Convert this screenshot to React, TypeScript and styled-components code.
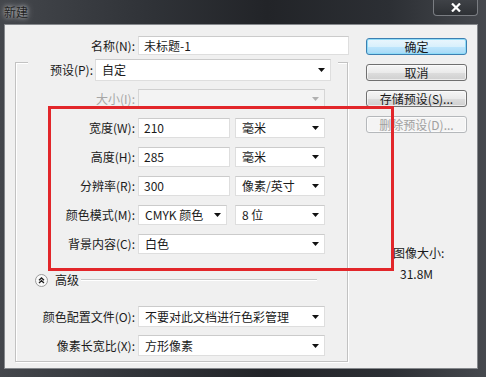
import React from 'react';
import styled, { createGlobalStyle } from 'styled-components';

const GlobalStyle = createGlobalStyle`
  html, body {
    margin: 0;
    padding: 0;
    background: #2d3035;
  }
  body {
    font-family: "Noto Sans CJK SC", "Noto Sans", sans-serif;
    font-size: 12px;
    color: #1a1a1a;
  }
`;

const Window = styled.div`
  position: relative;
  width: 486px;
  height: 377px;
  display: flex;
  flex-direction: column;
  background: linear-gradient(90deg, #44474c 0%, #303338 30%, #222428 55%, #2c2f34 80%, #46494e 100%);
  overflow: hidden;
`;

const TitleBar = styled.div`
  flex: none;
  height: 24px;
  display: flex;
  justify-content: space-between;
  align-items: flex-start;
  padding-left: 4px;
`;

const Title = styled.div`
  line-height: 24px;
  color: #222;
  text-shadow: 0 0 4px rgba(255, 255, 255, 0.75), 0 0 8px rgba(255, 255, 255, 0.4);
`;

const CloseButton = styled.div`
  width: 45px;
  height: 16px;
  margin-right: 8px;
  box-sizing: border-box;
  border: 1px solid #7a7d82;
  border-top: none;
  border-radius: 0 0 4px 4px;
  background: linear-gradient(#3f4247, #2e3135);
  display: flex;
  align-items: center;
  justify-content: center;
`;

const Body = styled.div`
  flex: 1;
  margin: 0 8px 8px 4px;
  background: #f0f0f0;
  border: 1px solid #85888c;
  display: flex;
`;

const LeftPane = styled.div`
  width: 344px;
  padding-top: 11px;
  display: flex;
  flex-direction: column;
`;

const NameRow = styled.div`
  display: grid;
  grid-template-columns: 130px 211px;
  column-gap: 3px;
  align-items: center;
`;

const Label = styled.div<{ $disabled?: boolean }>`
  text-align: right;
  white-space: nowrap;
  line-height: 16px;
  color: ${(p) => (p.$disabled ? '#a6a6a6' : '#1a1a1a')};
`;

const Field = styled.div<{ $w?: number; $h?: number }>`
  box-sizing: border-box;
  width: ${(p) => (p.$w ? `${p.$w}px` : '100%')};
  height: ${(p) => p.$h ?? 20}px;
  background: #fff;
  border: 1px solid #dedede;
  border-top-color: #cbcbcb;
  padding-left: 5px;
  display: flex;
  align-items: center;
  line-height: 16px;
  white-space: nowrap;
`;

const Select = styled.div<{ $w?: number; $h?: number; $disabled?: boolean }>`
  box-sizing: border-box;
  width: ${(p) => (p.$w ? `${p.$w}px` : '100%')};
  height: ${(p) => p.$h ?? 20}px;
  background: ${(p) => (p.$disabled ? '#f3f3f3' : '#fff')};
  border: 1px solid ${(p) => (p.$disabled ? '#d6d6d6' : '#dedede')};
  border-top-color: ${(p) => (p.$disabled ? '#cfcfcf' : '#cbcbcb')};
  padding: 0 5px 0 6px;
  display: flex;
  align-items: center;
  justify-content: space-between;
  line-height: 16px;
  white-space: nowrap;
`;

const GroupBox = styled.div`
  margin: 7px 0 0 10px;
  width: 333px;
  height: 300px;
  box-sizing: border-box;
  border: 1px solid #c2c2c2;
  box-shadow: inset 1px 1px 0 #fff, 1px 1px 0 #fff;
  display: flex;
  flex-direction: column;
`;

const PresetRow = styled.div`
  margin: -4px 0 0 12px;
  width: 310px;
  height: 22px;
  background: #f0f0f0;
  display: flex;
  align-items: center;
  gap: 2px;
`;

const PresetLabel = styled(Label)`
  width: 65px;
`;

const FormGrid = styled.div<{ $gap: number; $top: number }>`
  margin-top: ${(p) => p.$top}px;
  display: grid;
  grid-template-columns: 119px 187px;
  column-gap: 3px;
  row-gap: ${(p) => p.$gap}px;
  align-items: center;
`;

const Pair = styled.div<{ $gap: number }>`
  display: flex;
  gap: ${(p) => p.$gap}px;
`;

const AdvancedRow = styled.div`
  margin-top: 18px;
  height: 16px;
  padding-left: 19px;
  display: flex;
  align-items: center;
`;

const AdvancedText = styled.span`
  margin-left: 7px;
  line-height: 16px;
`;

const Separator = styled.div`
  flex: 1;
  margin: 0 30px 0 2px;
  border-top: 1px solid #c8c8c8;
  border-bottom: 1px solid #fff;
`;

const RightPane = styled.div`
  margin-left: 17px;
  width: 101px;
  padding-top: 13px;
  display: flex;
  flex-direction: column;
  gap: 9px;
`;

const Button = styled.button<{ $variant?: 'default' | 'disabled' }>`
  height: 17px;
  padding: 0;
  box-sizing: border-box;
  font: inherit;
  line-height: 14px;
  border-radius: 3px;
  border: 1px solid ${(p) => (p.$variant === 'default' ? '#3c7fb1' : p.$variant === 'disabled' ? '#b5b8bb' : '#707070')};
  color: ${(p) => (p.$variant === 'disabled' ? '#a0a0a0' : '#1a1a1a')};
  background: ${(p) =>
    p.$variant === 'default'
      ? 'linear-gradient(#eaf6fd, #d9f0fc 50%, #bee6fd 51%, #a7d9f5)'
      : p.$variant === 'disabled'
        ? '#f4f4f4'
        : 'linear-gradient(#f6f6f6, #eaeaea 50%, #dddddd 51%, #cfcfcf)'};
  box-shadow: ${(p) => (p.$variant === 'default' ? 'inset 0 0 0 1px #8fdcf8' : 'inset 0 0 0 1px rgba(255,255,255,0.6)')};
`;

const ImageSize = styled.div`
  margin: 103px 0 0 27px;
  line-height: 16px;
  display: flex;
  flex-direction: column;
  gap: 5px;
`;

const ImageSizeValue = styled.span`
  padding-left: 7px;
`;

const Annotation = styled.div`
  position: absolute;
  left: 48px;
  top: 106px;
  width: 346px;
  height: 165px;
  box-sizing: border-box;
  border: 3px solid #e2262a;
  pointer-events: none;
`;

const Arrow = ({ disabled }: { disabled?: boolean }) => (
  <svg width="7" height="4" viewBox="0 0 7 4">
    <path d="M0 0h7L3.5 4z" fill={disabled ? '#b0b0b0' : '#111'} />
  </svg>
);

const Dropdown = ({ value, w, h, disabled }: { value?: string; w?: number; h?: number; disabled?: boolean }) => (
  <Select $w={w} $h={h} $disabled={disabled}>
    <span>{value}</span>
    <Arrow disabled={disabled} />
  </Select>
);

const AdvancedIcon = () => (
  <svg width="13" height="13" viewBox="0 0 13 13">
    <circle cx="6.5" cy="6.5" r="6" fill="#fafafa" stroke="#9a9a9a" />
    <path d="M4 6.2l2.5-2.3 2.5 2.3M4 9l2.5-2.3L9 9" fill="none" stroke="#222" strokeWidth="1.3" />
  </svg>
);

export default function App() {
  return (
    <>
      <GlobalStyle />
      <Window>
        <TitleBar>
          <Title>新建</Title>
          <CloseButton>
            <svg width="10" height="9" viewBox="0 0 10 9">
              <path d="M1 0.5l8 8M9 0.5l-8 8" stroke="#fff" strokeWidth="2.2" />
            </svg>
          </CloseButton>
        </TitleBar>
        <Body>
          <LeftPane>
            <NameRow>
              <Label>名称(N):</Label>
              <Field $h={19}>未标题-1</Field>
            </NameRow>
            <GroupBox>
              <PresetRow>
                <PresetLabel>预设(P):</PresetLabel>
                <Dropdown value="自定" w={236} h={22} />
              </PresetRow>
              <FormGrid $gap={9} $top={8}>
                <Label $disabled>大小(I):</Label>
                <Dropdown disabled />
                <Label>宽度(W):</Label>
                <Pair $gap={5}>
                  <Field $w={92}>210</Field>
                  <Dropdown value="毫米" w={90} />
                </Pair>
                <Label>高度(H):</Label>
                <Pair $gap={5}>
                  <Field $w={92}>285</Field>
                  <Dropdown value="毫米" w={90} />
                </Pair>
                <Label>分辨率(R):</Label>
                <Pair $gap={5}>
                  <Field $w={92}>300</Field>
                  <Dropdown value="像素/英寸" w={90} />
                </Pair>
                <Label>颜色模式(M):</Label>
                <Pair $gap={8}>
                  <Dropdown value="CMYK 颜色" w={89} />
                  <Dropdown value="8 位" w={90} />
                </Pair>
                <Label>背景内容(C):</Label>
                <Dropdown value="白色" />
              </FormGrid>
              <AdvancedRow>
                <AdvancedIcon />
                <AdvancedText>高级</AdvancedText>
                <Separator />
              </AdvancedRow>
              <FormGrid $gap={8} $top={18}>
                <Label>颜色配置文件(O):</Label>
                <Dropdown value="不要对此文档进行色彩管理" h={21} />
                <Label>像素长宽比(X):</Label>
                <Dropdown value="方形像素" h={21} />
              </FormGrid>
            </GroupBox>
          </LeftPane>
          <RightPane>
            <Button $variant="default">确定</Button>
            <Button>取消</Button>
            <Button>存储预设(S)...</Button>
            <Button $variant="disabled">删除预设(D)...</Button>
            <ImageSize>
              <span>图像大小:</span>
              <ImageSizeValue>31.8M</ImageSizeValue>
            </ImageSize>
          </RightPane>
        </Body>
        <Annotation />
      </Window>
    </>
  );
}
